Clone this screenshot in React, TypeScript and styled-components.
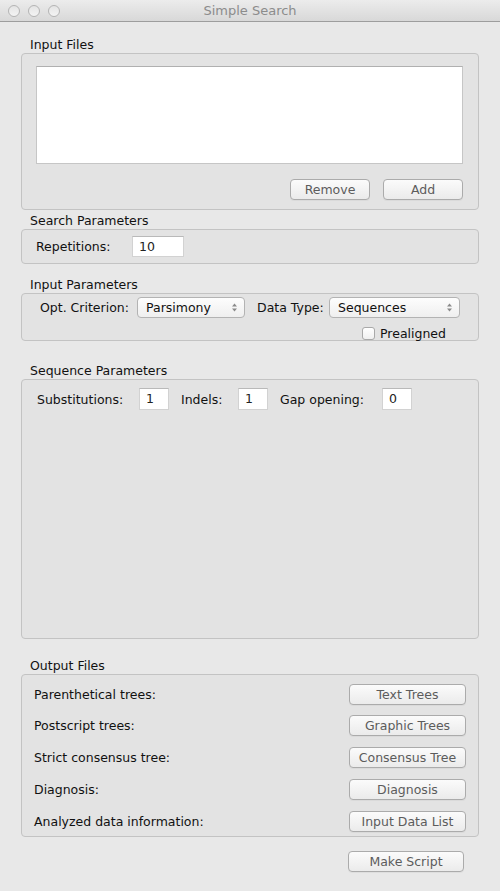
import React from "react";
import styled, { createGlobalStyle } from "styled-components";

const Global = createGlobalStyle`
  html, body { margin: 0; padding: 0; background: #e8e8e8; }
  body { font-family: "DejaVu Sans", "Liberation Sans", sans-serif; font-size: 12.5px; color: #1a1a1a; }
  * { box-sizing: border-box; }
`;

const Window = styled.div`
  width: 500px;
  height: 891px;
  background: #e8e8e8;
  display: flex;
  flex-direction: column;
`;

const TitleBar = styled.div`
  height: 22px;
  flex: none;
  background: linear-gradient(#ececec, #d8d8d8);
  border-bottom: 1px solid #9d9d9d;
  display: flex;
  align-items: center;
  position: relative;
`;

const Lights = styled.div`
  display: flex;
  gap: 8px;
  padding-left: 8px;
`;

const Light = styled.span`
  width: 12px;
  height: 12px;
  border-radius: 50%;
  border: 1px solid #b4b4b4;
  background: linear-gradient(#e4e4e4, #f4f4f4);
`;

const Title = styled.div`
  position: absolute;
  left: 0;
  right: 0;
  text-align: center;
  color: #8c8c8c;
  font-size: 13px;
  pointer-events: none;
`;

const Content = styled.div`
  padding: 0 21px;
  display: flex;
  flex-direction: column;
`;

const Section = styled.section<{ $top: number }>`
  margin-top: ${(p) => p.$top}px;
  display: flex;
  flex-direction: column;
`;

const SectionLabel = styled.div`
  height: 16px;
  line-height: 16px;
  padding-left: 9px;
  font-size: 12.5px;
  color: #111;
`;

const Box = styled.div<{ $h: number }>`
  height: ${(p) => p.$h}px;
  border: 1px solid #c3c3c3;
  border-radius: 4px;
  background: #e3e3e3;
  display: flex;
  flex-direction: column;
`;

const FileList = styled.div`
  margin: 12px 15px 0 14px;
  height: 98px;
  background: #fff;
  border: 1px solid #c6c6c6;
  border-top-color: #b0b0b0;
`;

const ButtonRow = styled.div<{ $top: number; $right: number }>`
  display: flex;
  justify-content: flex-end;
  gap: 13px;
  margin-top: ${(p) => p.$top}px;
  padding-right: ${(p) => p.$right}px;
`;

const Button = styled.button<{ $w: number }>`
  width: ${(p) => p.$w}px;
  height: 21px;
  padding: 0;
  border: 1px solid #ababab;
  border-radius: 4px;
  background: linear-gradient(#fbfbfb, #ebebeb);
  color: #5c5c5c;
  font-family: "DejaVu Sans", "Liberation Sans", sans-serif;
  font-size: 12.5px;
  line-height: 19px;
  text-align: center;
  box-shadow: 0 1px 0 rgba(0, 0, 0, 0.04);
`;

const Row = styled.div<{ $top: number; $left: number }>`
  display: flex;
  align-items: center;
  margin-top: ${(p) => p.$top}px;
  padding-left: ${(p) => p.$left}px;
`;

const Label = styled.span<{ $w?: number }>`
  ${(p) => (p.$w ? `width: ${p.$w}px;` : "")}
  flex: none;
  white-space: nowrap;
  color: #111;
`;

const TextField = styled.div<{ $w: number; $h: number }>`
  width: ${(p) => p.$w}px;
  height: ${(p) => p.$h}px;
  flex: none;
  background: #fff;
  border: 1px solid #d2d2d2;
  border-top-color: #b9b9b9;
  padding-left: 6px;
  line-height: ${(p) => p.$h - 2}px;
  font-size: 12.5px;
  color: #222;
`;

const Select = styled.div<{ $w: number }>`
  width: ${(p) => p.$w}px;
  height: 21px;
  flex: none;
  border: 1px solid #b3b3b3;
  border-radius: 4px;
  background: linear-gradient(#fdfdfd, #efefef);
  display: flex;
  align-items: center;
  justify-content: space-between;
  padding: 0 6px 0 8px;
  color: #111;
  line-height: 19px;
`;

const CheckRow = styled.div`
  display: flex;
  align-items: center;
  justify-content: flex-end;
  padding-right: 32px;
  margin-top: 8px;
  gap: 5px;
`;

const Check = styled.span`
  width: 13px;
  height: 13px;
  border: 1px solid #a9a9a9;
  border-radius: 3px;
  background: linear-gradient(#ffffff, #f0f0f0);
`;

const OutRow = styled.div<{ $top: number }>`
  display: flex;
  align-items: center;
  justify-content: space-between;
  margin-top: ${(p) => p.$top}px;
  padding-left: 12px;
  padding-right: 12px;
`;

const Arrows = () => (
  <svg width="7" height="11" viewBox="0 0 7 11">
    <path d="M1 4.5 L3.5 1.5 L6 4.5 Z" fill="#8a8a8a" />
    <path d="M1 6.5 L3.5 9.5 L6 6.5 Z" fill="#8a8a8a" />
  </svg>
);

const outputs: [string, string, number][] = [
  ["Parenthetical trees:", "Text Trees", 9],
  ["Postscript trees:", "Graphic Trees", 10],
  ["Strict consensus tree:", "Consensus Tree", 11],
  ["Diagnosis:", "Diagnosis", 11],
  ["Analyzed data information:", "Input Data List", 11],
];

export default function App() {
  return (
    <Window>
      <Global />
      <TitleBar>
        <Lights>
          <Light />
          <Light />
          <Light />
        </Lights>
        <Title>Simple Search</Title>
      </TitleBar>
      <Content>
        <Section $top={15}>
          <SectionLabel>Input Files</SectionLabel>
          <Box $h={157}>
            <FileList />
            <ButtonRow $top={15} $right={15}>
              <Button $w={80}>Remove</Button>
              <Button $w={80}>Add</Button>
            </ButtonRow>
          </Box>
        </Section>

        <Section $top={3}>
          <SectionLabel>Search Parameters</SectionLabel>
          <Box $h={35}>
            <Row $top={6} $left={14}>
              <Label $w={96}>Repetitions:</Label>
              <TextField $w={52} $h={21}>10</TextField>
            </Row>
          </Box>
        </Section>

        <Section $top={13}>
          <SectionLabel>Input Parameters</SectionLabel>
          <Box $h={48}>
            <Row $top={3} $left={18}>
              <Label $w={97}>Opt. Criterion:</Label>
              <Select $w={108}>
                Parsimony
                <Arrows />
              </Select>
              <Label $w={72} style={{ marginLeft: 12 }}>Data Type:</Label>
              <Select $w={131}>
                Sequences
                <Arrows />
              </Select>
            </Row>
            <CheckRow>
              <Check />
              <Label>Prealigned</Label>
            </CheckRow>
          </Box>
        </Section>

        <Section $top={22}>
          <SectionLabel>Sequence Parameters</SectionLabel>
          <Box $h={260}>
            <Row $top={8} $left={15}>
              <Label $w={102}>Substitutions:</Label>
              <TextField $w={30} $h={22}>1</TextField>
              <Label $w={57} style={{ marginLeft: 12 }}>Indels:</Label>
              <TextField $w={30} $h={22}>1</TextField>
              <Label $w={102} style={{ marginLeft: 12 }}>Gap opening:</Label>
              <TextField $w={30} $h={22}>0</TextField>
            </Row>
          </Box>
        </Section>

        <Section $top={19}>
          <SectionLabel>Output Files</SectionLabel>
          <Box $h={163}>
            {outputs.map(([label, btn, top]) => (
              <OutRow key={btn} $top={top}>
                <Label>{label}</Label>
                <Button $w={117}>{btn}</Button>
              </OutRow>
            ))}
          </Box>
        </Section>

        <ButtonRow $top={14} $right={15}>
          <Button $w={116}>Make Script</Button>
        </ButtonRow>
      </Content>
    </Window>
  );
}
